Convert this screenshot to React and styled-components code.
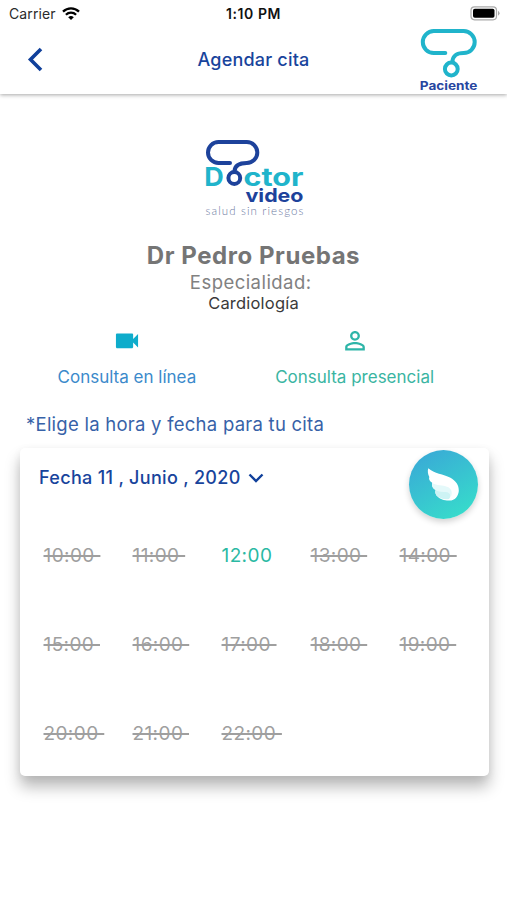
import React, { useState } from "react";
import styled, { createGlobalStyle } from "styled-components";
import { MdVideocam, MdPersonOutline } from "react-icons/md";

const GlobalStyle = createGlobalStyle`
	* {
		box-sizing: border-box;
	}
	body {
		margin: 0;
		background: #fff;
		font-family: "Inter", "Liberation Sans", sans-serif;
	}
`;

const Screen = styled.div`
	width: 507px;
	height: 900px;
	overflow: hidden;
	background: #fff;
`;

const Text = styled.span`
	display: block;
	white-space: pre;
	font-size: ${(p) => p.$size}px;
	line-height: ${(p) => p.$line || 24}px;
	font-weight: ${(p) => p.$weight || 400};
	letter-spacing: ${(p) => p.$spacing || 0}px;
	color: ${(p) => p.$color};
`;

const TopBar = styled.header`
	height: 94px;
	background: #fff;
	box-shadow: 0 1px 4px rgba(0, 0, 0, 0.35);
`;

const StatusBar = styled.div`
	display: grid;
	grid-template-columns: 1fr auto 1fr;
	align-items: center;
	height: 28px;
	padding: 0 7px 0 9px;
`;

const Signal = styled.div`
	display: flex;
	align-items: center;
	gap: 6px;
`;

const Clock = styled.div`
	padding-right: 2px;
`;

const Battery = styled.svg`
	justify-self: end;
`;

const NavBar = styled.div`
	display: grid;
	grid-template-columns: 1fr auto 1fr;
	height: 66px;
	padding: 0 27px;
`;

const BackButton = styled.button`
	justify-self: start;
	display: flex;
	margin-top: 19px;
	padding: 0;
	border: none;
	background: none;
	cursor: pointer;
`;

const NavTitle = styled.div`
	padding-top: 20px;
`;

const PatientLogo = styled.svg`
	justify-self: end;
`;

const Doctor = styled.section`
	display: flex;
	flex-direction: column;
	align-items: center;
	padding-top: 42px;
`;

const DoctorName = styled.div`
	padding-top: 20px;
`;

const Modes = styled.div`
	display: flex;
	height: 76px;
	padding: 12.5px 38.5px 0 13px;
`;

const Mode = styled.button`
	display: flex;
	flex: 1;
	flex-direction: column;
	align-items: center;
	gap: 10px;
	padding: 0;
	border: none;
	background: none;
	color: ${(p) => p.$color};
	font-family: inherit;
	cursor: pointer;
`;

const Hint = styled.div`
	padding: 23px 0 12px 26px;
`;

const Card = styled.section`
	position: relative;
	height: 328px;
	margin: 0 18.5px 0 19.5px;
	padding: 18px 0 0 19.5px;
	border-radius: 5px;
	background: #fff;
	box-shadow: 0 11px 15px rgba(0, 0, 0, 0.27), 0 2px 8px rgba(0, 0, 0, 0.06);
`;

const DateButton = styled.button`
	display: flex;
	align-items: center;
	gap: 7px;
	padding: 0;
	border: none;
	background: none;
	font-family: inherit;
	cursor: pointer;
`;

const Slots = styled.div`
	display: grid;
	grid-template-columns: repeat(5, 89px);
	grid-auto-rows: 89px;
	padding: 54px 0 0 4.5px;
`;

const Slot = styled.button`
	justify-self: start;
	align-self: start;
	padding: 0;
	border: none;
	background: none;
	white-space: pre;
	font-family: inherit;
	font-size: 19px;
	line-height: 24px;
	letter-spacing: 0.4px;
	color: ${(p) => (p.$free ? "#2bb9a3" : "#9f9f9f")};
	text-decoration: ${(p) => (p.$free ? "none" : "line-through")};
	text-decoration-thickness: 1.5px;
`;

// floats over the top right corner of the card
const WingButton = styled.button`
	position: absolute;
	top: 2px;
	right: 10.5px;
	width: 69px;
	height: 69px;
	padding: 0;
	border: none;
	border-radius: 50%;
	background: linear-gradient(150deg, #39abd6 10%, #37dccb 90%);
	box-shadow: 0 3px 6px rgba(0, 0, 0, 0.18);
	cursor: pointer;
`;

const hours = [10, 11, 12, 13, 14, 15, 16, 17, 18, 19, 20, 21, 22];
const freeHours = [12];

const StatusIcons = () => (
	<Signal>
		<Text $size={14} $line={18} $spacing={0.1} $color="#2b2b2b">Carrier</Text>
		<svg width="18" height="14" viewBox="0 0 18 14" fill="none" stroke="#000" strokeWidth="2.3">
			<path d="M1 4.6a11.6 11.6 0 0 1 16 0" />
			<path d="M3.9 7.8a7.3 7.3 0 0 1 10.2 0" />
			<path d="M9 13L6.2 10.3a4 4 0 0 1 5.6 0z" fill="#000" stroke="none" />
		</svg>
	</Signal>
);

const DoctorVideoLogo = () => (
	<svg width="104" height="84" viewBox="0 0 104 84" fontFamily="Inter, sans-serif">
		<text x="2.2" y="49.7" fontSize="26" fontWeight="700" fill="#20b4cb" textLength="19.5" lengthAdjust="spacingAndGlyphs">D</text>
		<text x="41.5" y="49.7" fontSize="25" fontWeight="700" fill="#20b4cb" textLength="60" lengthAdjust="spacingAndGlyphs">ctor</text>
		<text x="43.5" y="66" fontSize="18.5" fontWeight="700" fill="#1d429b" textLength="58" lengthAdjust="spacingAndGlyphs">video</text>
		<text x="3.5" y="79" fontFamily="Lato, sans-serif" fontSize="11.5" fontWeight="300" fill="#6c7a9f" textLength="98" lengthAdjust="spacing">salud sin riesgos</text>
		<g fill="none" stroke="#1d429b" strokeWidth="4">
			<path d="M28 27H16.5a10.5 10.5 0 0 1 0-21H44.8a10.5 10.5 0 0 1 0 21C38 27 33 29 32.5 35" strokeLinecap="round" />
			<circle cx="32.3" cy="42" r="5.9" />
		</g>
	</svg>
);

const App = () => {
	const [selected, setSelected] = useState(null);

	return (
		<Screen>
			<GlobalStyle />
			<TopBar>
				<StatusBar>
					<StatusIcons />
					<Clock>
						<Text $size={14} $line={18} $weight={600} $spacing={0.6} $color="#111">1:10 PM</Text>
					</Clock>
					<Battery width="30" height="16" viewBox="0 0 30 16">
						<rect x="1" y="0.8" width="25.5" height="13" rx="3.5" fill="#fff" stroke="#aaa" strokeWidth="1.2" />
						<rect x="3" y="2.8" width="21.5" height="9" rx="1.8" fill="#000" />
						<path d="M28 4.8q3.2 2.5 0 5z" fill="#aaa" />
					</Battery>
				</StatusBar>
				<NavBar>
					<BackButton aria-label="Regresar">
						<svg width="17" height="25" viewBox="0 0 17 25" fill="none" stroke="#10409b" strokeWidth="3.6">
							<path d="M14 2L3.5 12.5L14 23" />
						</svg>
					</BackButton>
					<NavTitle>
						<Text $size={18} $line={24} $weight={500} $spacing={0.2} $color="#18449c">Agendar cita</Text>
					</NavTitle>
					<PatientLogo width="62" height="66" viewBox="0 0 62 66">
						<g fill="none" stroke="#20b4cb" strokeWidth="4">
							<path d="M27.3 25.1H15.8a11 11 0 0 1 0-22H45.7a11 11 0 0 1 0 22C39 25.1 35 27 34.3 34" strokeLinecap="round" />
							<circle cx="33.3" cy="41" r="6.4" />
						</g>
						<text x="1.8" y="61.6" fontFamily="Inter, sans-serif" fontSize="12" fontWeight="700" fill="#27469f" textLength="57.5" lengthAdjust="spacingAndGlyphs">Paciente</text>
					</PatientLogo>
				</NavBar>
			</TopBar>

			<Doctor>
				<DoctorVideoLogo />
				<DoctorName>
					<Text $size={24} $line={31} $weight={700} $spacing={0.55} $color="#757575">Dr Pedro Pruebas</Text>
				</DoctorName>
				<Text $size={18.5} $line={22} $spacing={0.45} $color="#818181">{"Especialidad: "}</Text>
				<Text $size={16.5} $line={20} $spacing={0.2} $color="#3a3a3a">Cardiología</Text>
			</Doctor>

			<Modes>
				<Mode $color="#0eaccb">
					<MdVideocam size={30} />
					<Text $size={17} $color="#3b8acb">Consulta en línea</Text>
				</Mode>
				<Mode $color="#2eb5a8">
					<MdPersonOutline size={30} />
					<Text $size={17} $color="#3ab5a2">Consulta presencial</Text>
				</Mode>
			</Modes>

			<Hint>
				<Text $size={18.5} $spacing={0.25} $color="#3762a8">*Elige la hora y fecha para tu cita</Text>
			</Hint>

			<Card>
				<DateButton>
					<Text $size={18} $weight={500} $spacing={0.32} $color="#18449c">Fecha 11 , Junio , 2020</Text>
					<svg width="16" height="10" viewBox="0 0 16 10" fill="none" stroke="#10409b" strokeWidth="2.4">
						<path d="M1.5 1.5L8 8L14.5 1.5" />
					</svg>
				</DateButton>
				<Slots>
					{hours.map((hour) => (
						<Slot key={hour} $free={freeHours.includes(hour)} aria-pressed={selected === hour} onClick={() => setSelected(hour)}>
							{`${hour}:00 `}
						</Slot>
					))}
				</Slots>
				<WingButton aria-label="Asistente">
					<svg width="69" height="69" viewBox="0 0 69 69">
						<path d="M19.3 18.3C25 23.5 35 24.5 41 27.5C47 31 50 35 49.8 41C49.4 46 46 50.6 40.5 50.6C36 50.8 31 49.5 27.5 45.5C26 43 26 41 27 40C24 39 22.5 36 23.2 32.8C20.5 31 19.5 29 20.3 27C18.8 24 18.4 21 19.3 18.3Z" fill="#fff" />
						<path d="M26.5 39.8C31 41.8 36 41 39.5 41.5C42 43 42.2 46.5 40 49C35 49.8 30.5 48.5 27.5 45.5C26 43 26 41 26.5 39.8Z" fill="#cdf3f4" />
						<path d="M23.2 33C28 36 34 35 38 36.8C42 38 44 42 42 46.5C41 43 39 41.5 35 42C31 42 28.5 41 27 40C24 39 22.5 36 23.2 33Z" fill="#e4f9fa" />
					</svg>
				</WingButton>
			</Card>
		</Screen>
	);
};

export default App;
